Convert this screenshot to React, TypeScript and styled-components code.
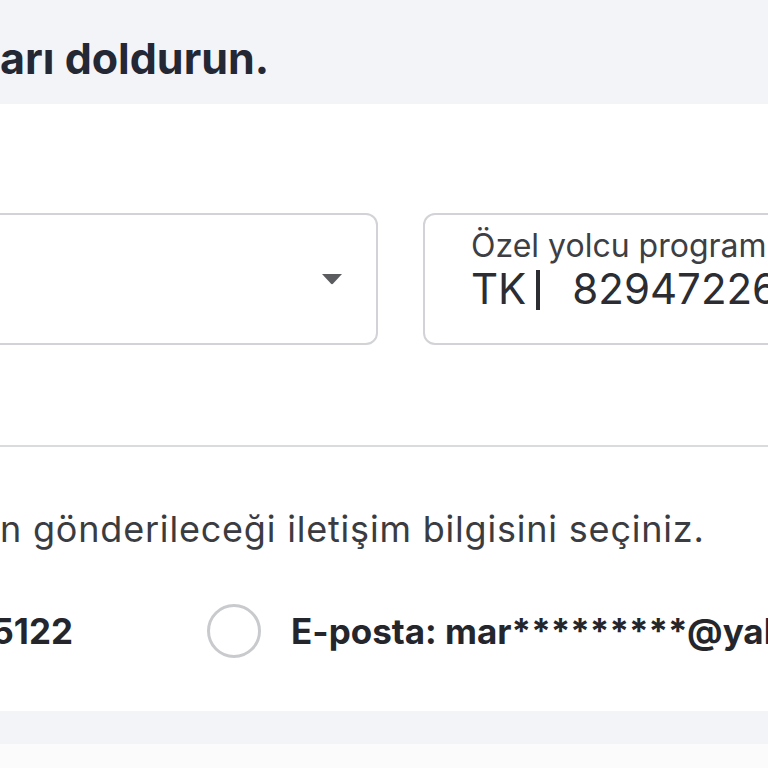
import React from 'react';
import styled, { createGlobalStyle } from 'styled-components';

const GlobalStyle = createGlobalStyle`
  html, body {
    margin: 0;
    padding: 0;
    background: #fbfbfc;
    font-family: Inter, Lato, "Noto Sans", sans-serif;
    overflow: hidden;
  }
`;

const Page = styled.div`
  width: 768px;
  height: 768px;
  overflow: hidden;
  display: flex;
  flex-direction: column;
`;

const TopBand = styled.header`
  height: 104px;
  box-sizing: border-box;
  padding-top: 37px;
  background: #f3f4f8;
`;

const Heading = styled.h1`
  margin: 0;
  font-size: 43px;
  line-height: 1;
  font-weight: 700;
  color: #232834;
  white-space: nowrap;
`;

const Card = styled.section`
  background: #fff;
  padding: 109px 0 53px;
  display: flex;
  flex-direction: column;
`;

const FieldRow = styled.div`
  display: flex;
  gap: 45px;
  margin-left: -24px;
`;

const Box = styled.div<{ $width: number }>`
  box-sizing: border-box;
  height: 132px;
  flex: 0 0 ${(p) => p.$width}px;
  border: 2px solid #d2d3d6;
  border-radius: 12px;
  background: #fff;
  overflow: hidden;
`;

const SelectBox = styled(Box)`
  display: flex;
  align-items: center;
  justify-content: flex-end;
  padding-right: 33px;
`;

const Caret = styled.svg`
  width: 22px;
  height: 12px;
  fill: #5b5c60;
`;

const InputBox = styled(Box)`
  padding: 15px 0 0 46px;
  white-space: nowrap;
`;

const FieldLabel = styled.div`
  font-size: 32px;
  line-height: 1;
  color: #3d3f44;
`;

const FieldValue = styled.div`
  margin-top: 6px;
  font-size: 42px;
  line-height: 1;
  color: #2b2d33;
`;

const Pipe = styled.span`
  display: inline-block;
  width: 4px;
  height: 40px;
  margin: 0 32px -6px 10px;
  background: #2b2d33;
`;

const Divider = styled.hr`
  margin: 100px 0 0;
  border: none;
  height: 2px;
  background: #dadbdd;
`;

const Instruction = styled.p`
  margin: 64px 0 0;
  font-size: 36px;
  letter-spacing: 0.8px;
  line-height: 1;
  color: #3a3c42;
  white-space: nowrap;
`;

const OptionRow = styled.div`
  margin-top: 57px;
  display: flex;
  align-items: center;
  white-space: nowrap;
`;

const Option = styled.label`
  display: flex;
  align-items: center;
  gap: 30px;
  font-size: 35px;
  line-height: 54px;
  font-weight: 700;
  color: #24262c;
`;

const PhoneOption = styled(Option)`
  flex: 0 0 73px;
  min-width: 0;
  justify-content: flex-end;
  margin-right: 134px;
`;

const Radio = styled.span`
  box-sizing: border-box;
  flex: 0 0 54px;
  height: 54px;
  border-radius: 50%;
  border: 3px solid #c9cacd;
  background: #fff;
`;

const BottomBand = styled.div`
  height: 33px;
  background: #f3f4f7;
`;

export default function App() {
  return (
    <Page>
      <GlobalStyle />
      <TopBand>
        <Heading>arı doldurun.</Heading>
      </TopBand>
      <Card>
        <FieldRow>
          <SelectBox $width={402}>
            <Caret viewBox="0 0 22 12">
              <path d="M1 1 H21 L12.2 10.6 Q11 11.8 9.8 10.6 Z" />
            </Caret>
          </SelectBox>
          <InputBox $width={420}>
            <FieldLabel>Özel yolcu programı üyelik numarası</FieldLabel>
            <FieldValue>
              TK<Pipe />829472261
            </FieldValue>
          </InputBox>
        </FieldRow>
        <Divider />
        <Instruction>n gönderileceği iletişim bilgisini seçiniz.</Instruction>
        <OptionRow>
          <PhoneOption>5122</PhoneOption>
          <Option>
            <Radio />
            E-posta: mar*********@yahoo.com
          </Option>
        </OptionRow>
      </Card>
      <BottomBand />
    </Page>
  );
}
